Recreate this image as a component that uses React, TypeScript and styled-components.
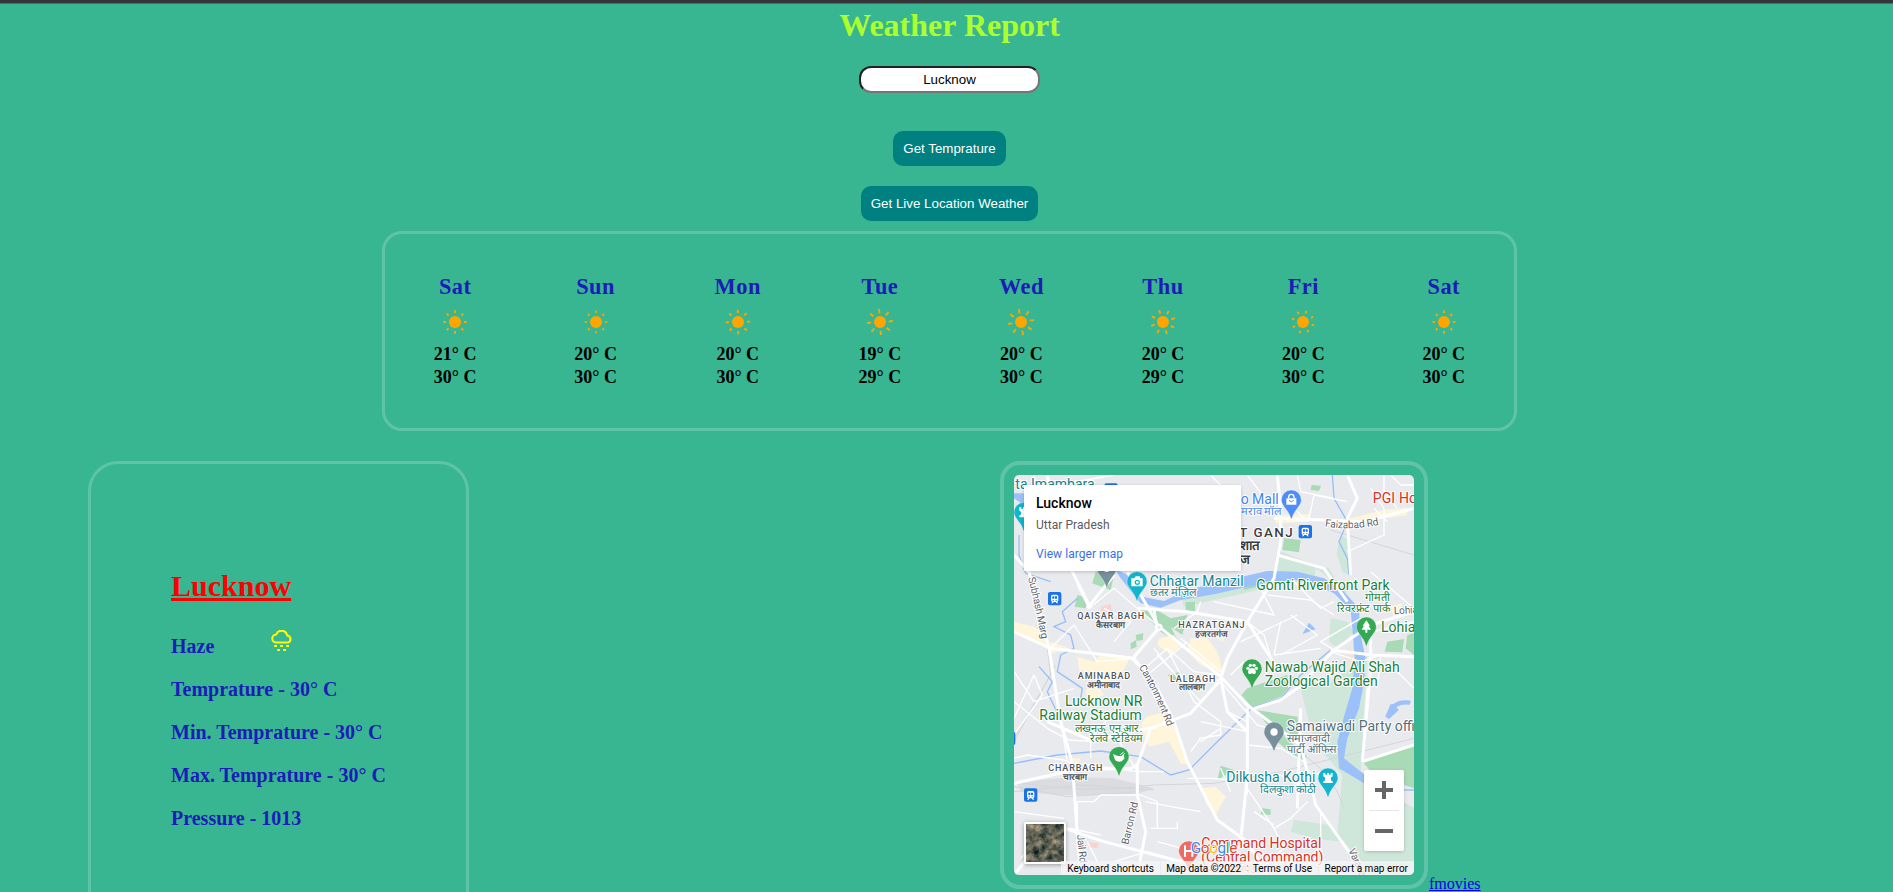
import React from "react";
import styled, { createGlobalStyle } from "styled-components";

const GlobalStyle = createGlobalStyle`
  * { box-sizing: border-box; }
  html, body { margin: 0; padding: 0; background: #37b691; overflow: hidden; }
`;

const Page = styled.main`
  height: 892px;
  overflow: hidden;
  background: #37b691;
  border-top: 3px solid #35363a;
  box-shadow: inset 0 1px 0 #57695f;
  font-family: "Liberation Serif", "Times New Roman", serif;
`;

const Header = styled.header`
  display: flex;
  flex-direction: column;
  align-items: center;
  padding: 4px 0 0 6px;
`;

const Title = styled.h1`
  margin: 0;
  font-size: 32px;
  line-height: 37px;
  color: #adff2f;
`;

const CityInput = styled.input`
  margin-top: 22px;
  width: 181px;
  height: 27px;
  padding: 1px 2px;
  border: 2px inset #767676;
  border-radius: 12px;
  background: #fff;
  color: #000;
  font: 13.333px "Liberation Sans", Arial, sans-serif;
  text-align: center;
`;

const ActionButton = styled.button<{ $gap: number }>`
  margin-top: ${(p) => p.$gap}px;
  height: 35px;
  padding: 10px;
  border: 0;
  border-radius: 10px;
  background: #008080;
  color: #fff;
  font: 13.333px/15px "Liberation Sans", Arial, sans-serif;
`;

const Forecast = styled.section`
  display: flex;
  justify-content: space-around;
  width: 1135px;
  height: 200px;
  margin: 10px 0 0 382px;
  padding-top: 40px;
  border: 3px solid rgba(255, 255, 255, 0.2);
  border-radius: 20px;
`;

const Day = styled.div`
  display: flex;
  flex-direction: column;
  align-items: center;
`;

const DayName = styled.h2`
  margin: 0;
  font-size: 22.4px;
  line-height: 26px;
  letter-spacing: 0.5px;
  color: #1c1cb8;
`;

const SunSvg = styled.svg`
  display: block;
  width: 30px;
  height: 30px;
  margin: 7px 0 6px;
`;

const Temp = styled.span`
  font-size: 18px;
  font-weight: bold;
  line-height: 23px;
  color: #000;
`;

const Details = styled.div`
  display: flex;
  align-items: flex-start;
  margin-top: 30px;
`;

const Current = styled.section`
  width: 381px;
  height: 500px;
  margin-left: 88px;
  padding: 104px 0 0 80px;
  border: 3px solid rgba(255, 255, 255, 0.2);
  border-radius: 30px;
`;

const City = styled.h2`
  margin: 0 0 32px;
  font-size: 30px;
  line-height: 35px;
  color: #ff0000;
  text-decoration: underline;
  text-decoration-thickness: 3px;
  text-underline-offset: 2px;
  text-decoration-skip-ink: none;
`;

const Reading = styled.p`
  display: flex;
  margin: 0 0 20px;
  font-size: 20px;
  font-weight: bold;
  line-height: 23px;
  white-space: pre;
  color: #1c1cb8;
`;

const CloudSvg = styled.svg`
  width: 22px;
  height: 22px;
  margin: -5px 0 0 57px;
`;

const MapCard = styled.section`
  width: 428px;
  height: 428px;
  margin-left: 531px;
  padding: 10px;
  border: 4px solid rgba(255, 255, 255, 0.2);
  border-radius: 20px;
`;

const MapFrame = styled.div`
  position: relative;
  width: 400px;
  height: 400px;
  overflow: hidden;
  border-radius: 5px;
  font-family: Roboto, sans-serif;
`;

const MapSvg = styled.svg`
  display: block;
  width: 400px;
  height: 400px;
`;

const PlaceCard = styled.div`
  position: absolute;
  left: 10px;
  top: 10px;
  width: 217px;
  height: 86px;
  padding: 10px 12px;
  background: #fff;
  border-radius: 1px;
  box-shadow: 0 1px 4px -1px rgba(0, 0, 0, 0.3);
`;

const PlaceName = styled.div`
  font-size: 14px;
  font-weight: 500;
  line-height: 17px;
`;

const PlaceRegion = styled.div`
  margin-top: 6px;
  font-size: 12px;
  line-height: 14px;
  letter-spacing: 0.05px;
  color: #5b5b5b;
`;

const PlaceLink = styled.div`
  margin-top: 15px;
  font-size: 12px;
  line-height: 14px;
  letter-spacing: 0.05px;
  color: #3a6fe8;
`;

const ZoomBox = styled.div`
  position: absolute;
  right: 10px;
  top: 295px;
  width: 40px;
  height: 81px;
  background: #fff;
  border-radius: 2px;
  box-shadow: 0 1px 4px -1px rgba(0, 0, 0, 0.3);
`;

const SatelliteBox = styled.div`
  position: absolute;
  left: 10px;
  top: 347px;
  width: 42px;
  height: 42px;
  border: 2px solid #fff;
  border-radius: 2px;
  box-shadow: 0 1px 4px rgba(0, 0, 0, 0.35);
  overflow: hidden;
`;

const Legal = styled.div`
  position: absolute;
  right: 0;
  bottom: 0;
  display: flex;
  height: 14px;
  font-size: 10px;
  line-height: 15px;
  color: #000;
`;

const LegalItem = styled.span<{ $w: number }>`
  width: ${(p) => p.$w}px;
  margin-left: 1px;
  padding-right: 6px;
  text-align: right;
  white-space: nowrap;
  background: rgba(245, 245, 245, 0.75);
`;

const FooterLink = styled.a`
  align-self: flex-start;
  margin: 414px 0 0 1px;
  font-size: 16px;
  line-height: 18px;
  color: #0000ee;
  text-decoration: underline;
`;

const days = [
  { name: "Sat", low: 21, high: 30, angle: 0, inner: 9, outer: 11.7 },
  { name: "Sun", low: 20, high: 30, angle: 0, inner: 9.2, outer: 11.2 },
  { name: "Mon", low: 20, high: 30, angle: -1, inner: 9, outer: 12.2 },
  { name: "Tue", low: 19, high: 29, angle: -4, inner: 8.8, outer: 13 },
  { name: "Wed", low: 20, high: 30, angle: -9, inner: 8.8, outer: 13.2 },
  { name: "Thu", low: 20, high: 29, angle: -18, inner: 8.8, outer: 12.5 },
  { name: "Fri", low: 20, high: 30, angle: -28, inner: 9, outer: 11.6 },
  { name: "Sat", low: 20, high: 30, angle: -45, inner: 9, outer: 11.4 },
];

const Sun = ({ angle, inner, outer }: { angle: number; inner: number; outer: number }) => (
  <SunSvg viewBox="-15 -15 30 30">
    <circle r="6" fill="#ffa500" />
    {[0, 45, 90, 135, 180, 225, 270, 315].map((a) => (
      <path
        key={a}
        d={`M0 ${-inner}V${-outer}`}
        stroke="#faa505"
        strokeWidth="2"
        transform={`rotate(${a + angle})`}
      />
    ))}
  </SunSvg>
);

const paleParks = [
  "M790 225L880 262L945 280L985 350L1010 400L995 345L905 280L900 330L860 310L780 285Z",
  "M980 180L1010 200L1005 300L985 290L968 235Z",
  "M950 430L1000 440L1020 470L970 520L945 500Z",
  "M820 600L940 630L1060 540L1050 700L1040 900L1200 1000V1200H1080L970 1080L985 900L900 800L880 720L860 640Z",
  "M840 1035L950 1050L980 1100L900 1090L830 1070Z",
  "M500 360L690 330L775 310V335L600 375L510 395Z",
];

const parks = [
  "M810 190L860 195L855 232L805 225Z",
  "M420 400L470 430L520 420L505 480L470 455L495 505L440 470L380 405Z",
  "M245 290L300 300L290 345L235 325Z",
  "M190 360L220 370L215 400L182 395Z",
  "M515 382L543 380L543 408L515 408Z",
  "M700 640L820 600L822 640L800 665L715 698L682 660Z",
  "M725 705L850 725L860 800L820 770L800 800Z",
  "M800 775L880 845L860 860L790 800Z",
  "M1045 860L1200 812V940L1080 900Z",
  "M1120 500L1170 492L1165 532L1112 530Z",
  "M1180 480L1200 475V540L1175 520Z",
  "M620 872L660 885L610 915Z",
  "M745 1000L770 1003L770 1020L740 1018Z",
  "M365 480L388 475L386 495L368 498Z",
  "M350 505L366 495L368 515L350 523Z",
  "M245 572L270 575L272 595L248 590Z",
  "M460 600L500 590L490 625Z",
  "M893 30L921 32L915 48L890 45Z",
  "M690 315L775 300V325L690 345Z",
];

const yellows = [
  "M0 440L60 455L100 480L95 515L60 495L0 470Z",
  "M190 545L240 560L260 540L350 545L320 600L270 625L230 590L195 585Z",
  "M435 490L480 480L500 510L470 540L430 510Z",
  "M530 490L580 490L610 530L630 600L560 570L520 530Z",
  "M395 725L450 712L490 770L525 870L500 865L465 800L405 815L380 750Z",
  "M565 940L605 935L635 965L605 1020L575 985Z",
  "M600 480L640 470L625 500Z",
  "M1000 132L1110 105L1180 98L1180 120L1050 140Z",
  "M1130 395L1165 385L1160 430L1140 425Z",
  "M215 645L250 630L270 660L220 680Z",
  "M110 500L165 520L100 540Z",
  "M785 120L885 118V140L785 145Z",
  "M165 850L200 850L190 870Z",
];

const waters = [
  "M300 280L340 300L385 365L450 378L520 345L640 315L760 288L850 290L930 310L985 345L1035 400L1038 470L1055 550L1050 620L1035 700L1000 790L990 850L1060 905L1050 925L975 880L970 800L990 725L1015 640L1022 550L1015 460L1010 405L960 355L900 328L840 315L700 335L600 358L500 375L440 398L380 385L320 310Z",
  "M865 478L885 443L905 462Z",
  "M0 55H30V90L0 70Z",
];

const streams = [
  "M955 0L960 70L1000 140L975 200L1000 250L1005 300",
  "M15 180V240L35 295L110 320M190 370L145 410L155 440L120 455L170 480L180 520L140 540L130 590L205 640L200 670M75 575L115 620L100 650L140 735",
  "M0 865L130 840L260 828L380 845L470 900L525 885L600 810L715 697L800 670L860 600L950 525",
  "M1120 725L1130 690L1190 682",
  "M1170 945H1200",
];

const minorRoads = [
  "M60 0L80 80L130 30L300 0M590 0L620 30M700 0L745 60L850 110L870 130M850 0L860 50L960 70M885 130L900 60L1000 80",
  "M0 590L60 680L180 640M0 680L100 760L165 795L245 800M0 730L60 600M140 735L160 860M0 780L85 660L60 600",
  "M110 520L180 450L250 560L360 550L435 455L300 340L225 400L190 330M270 400L350 440L300 500M350 550L400 600L520 500M380 590L460 520L540 590L620 600M420 520L500 620L620 615",
  "M430 540L560 680M460 520L540 680M500 490L620 590M540 680L620 740L620 780L555 790M560 790L530 830",
  "M560 380L550 410L480 460M600 380L780 420L740 340M760 360L890 375L960 420M700 440L750 480L770 545M800 440L780 540M830 420L910 480L800 540M680 500L850 420M780 540L920 520",
  "M0 850L40 840L150 855L175 865M185 865L220 870L370 890L450 890M370 890L310 790L235 790M230 850V790L300 710",
  "M190 980H240L260 960H380L430 980V1060M190 980V1100M395 980L500 1000L560 1010M0 1010L150 1030M410 1060H490V1040M430 1100L540 1130",
  "M520 910H600L700 920V960M700 900H800L850 930M620 880L650 950M700 940L780 1060L830 1030L880 980M780 1060L810 1120L720 1200M780 1050L720 1010",
  "M560 740L700 770M640 710L700 740M620 760L560 800M700 810L800 820L870 860M620 620L730 750L830 780",
  "M1110 0V50L1150 100M1070 40L1110 100V180L1000 230M1070 290L1200 400M1080 470L1200 440M1100 540L1090 640M1120 560L1200 640M1130 0L1160 30H1200M1080 100L1120 140",
  "M20 1150L120 1050L260 1080M220 1100L270 1200M300 1160L400 1130L540 1170M920 1010V1130L860 1200M1060 640L1050 780M900 900L950 880",
  "M690 560L650 600M840 320L920 400L960 380M950 530L1040 560L1100 540M960 525L920 500L1040 430",
];

const majorRoads = [
  "M0 240L45 290L80 420L105 520L140 740L175 865L190 1080L200 1200",
  "M340 290L435 455L540 540L620 605L700 690L860 810L905 990L1040 1180",
  "M0 470L110 520L360 550M360 545L430 465L420 405M360 550L430 640L480 740L520 860L610 1035L700 1100L760 1200",
  "M790 0L800 100V200L780 310L700 440L640 550L620 610L640 710L700 770V900L680 1100",
  "M370 400L520 410L700 440L790 580",
  "M370 1200L395 1070L370 960V870L410 760L530 715L615 620",
  "M0 925L180 885L350 880L370 870M410 760L340 770L240 800L100 740",
  "M720 700L800 675L850 640L960 525L1070 450L1200 410M950 525L1075 540L1200 545",
  "M1000 0L1030 70L1000 130L1010 300M780 130L930 135L1050 140L1200 100",
  "M790 240L930 280L1000 380M230 400L140 220L100 0M220 400L300 300",
  "M700 700V770M1045 860L1200 810M1070 480V580L1045 860M850 1000L860 700",
  "M120 1050L0 1200M120 1050L270 1100L540 1170",
];

interface LabelProps {
  x: number;
  y: number;
  w?: number;
  size?: number;
  color: string;
  weight?: number;
  anchor?: "start" | "middle" | "end";
  rotate?: number;
  children: string;
}

const MapLabel = ({ x, y, w, size = 42, color, weight = 400, anchor = "start", rotate, children }: LabelProps) => (
  <text
    x={x}
    y={y}
    textLength={w}
    fontSize={size}
    fontWeight={weight}
    fill={color}
    stroke="#fff"
    strokeWidth="6"
    strokeLinejoin="round"
    paintOrder="stroke"
    textAnchor={anchor}
    transform={rotate ? `rotate(${rotate} ${x} ${y})` : undefined}
  >
    {children}
  </text>
);

const Pin = ({ x, y, color, children }: { x: number; y: number; color: string; children?: React.ReactNode }) => (
  <g transform={`translate(${x} ${y})`}>
    <path
      d="M0 -30A30 30 0 0 1 30 0C30 17 9 29 2 54Q0 60 -2 54C-9 29 -30 17 -30 0A30 30 0 0 1 0 -30Z"
      fill={color}
      stroke="#fff"
      strokeOpacity="0.5"
      strokeWidth="2"
    />
    <g fill="#fff">{children}</g>
  </g>
);

const Station = ({ x, y }: { x: number; y: number }) => (
  <g transform={`translate(${x} ${y})`}>
    <rect x="-20" y="-20" width="40" height="40" rx="6" fill="#1a73e8" />
    <path
      d="M-6 -12H6Q11 -12 11 -7V5Q11 9 7 10L11 14H6L3 10H-3L-6 14H-11L-7 10Q-11 9 -11 5V-7Q-11 -12 -6 -12Z"
      fill="#fff"
    />
    <path d="M-7 -7H-1V0H-7ZM1 -7H7V0H1ZM-6 4H-3V7H-6ZM3 4H6V7H3Z" fill="#1a73e8" />
  </g>
);

const Tower = () => <path d="M-14 -15H-8V-10H-3V-15H3V-10H8V-15H14V-5L8 -1L10 9H14V15H-14V9H-10L-8 -1L-14 -5Z" />;

const green = "#188038";
const teal = "#12858f";
const slate = "#546e7a";
const area = "#50555b";
const red = "#d93025";

const CityMap = () => (
  <MapSvg viewBox="0 0 1200 1200">
    <rect width="1200" height="1200" fill="#e8eaed" />
    {paleParks.map((d) => <path key={d} d={d} fill="#cfe6da" />)}
    {parks.map((d) => <path key={d} d={d} fill="#a8dab5" />)}
    {yellows.map((d) => <path key={d} d={d} fill="#fef5da" />)}
    <path d="M260 395L290 388L295 410L262 412ZM220 1100L255 1105L250 1120L222 1115Z" fill="#fad2cf" />
    <path d="M985 535L1020 500L1025 570L985 580Z" fill="#efe6dd" />
    <path d="M10 925Q140 900 300 910L420 940L360 960L150 960L20 950Z" fill="#dadce0" />
    <g fill="none" stroke="#d3d6d9" strokeWidth="3">
      <path d="M0 920Q200 960 420 930L600 925L800 890L1200 790M0 950L200 930L420 945M0 935L160 965L370 950M950 165L1200 240" />
      <path d="M0 790L110 600L100 520M0 800L125 570M870 840Q960 900 990 1000" />
    </g>
    {streams.map((d) => <path key={d} d={d} fill="none" stroke="#98bff8" strokeWidth="4" />)}
    {waters.map((d) => <path key={d} d={d} fill="#9cc0f9" />)}
    <path d="M1120 728Q1135 675 1188 683M1120 728L1150 700" fill="none" stroke="#9cc0f9" strokeWidth="13" />
    {minorRoads.map((d) => (
      <path key={d} d={d} fill="none" stroke="#fff" strokeWidth="4" strokeLinejoin="round" />
    ))}
    {majorRoads.map((d) => (
      <path key={d} d={d} fill="none" stroke="#fff" strokeWidth="9" strokeLinejoin="round" />
    ))}
    <circle cx="435" cy="457" r="8" fill="#e8eaed" stroke="#fff" strokeWidth="6" />

    <MapLabel x={4} y={42} w={238} color={teal}>ta Imambara</MapLabel>
    <Station x={291} y={45} />
    <Pin x={30} y={112} color="#12b5cb"><Tower /></Pin>
    <Pin x={278} y={280} color="#78909c"><circle r="11" /></Pin>

    <MapLabel x={680} y={87} w={114} color="#4285f4">o Mall</MapLabel>
    <MapLabel x={680} y={121} size={33} color="#4285f4">मराव मॉल</MapLabel>
    <Pin x={832} y={75} color="#4e8df5">
      <path d="M-15 -5H15V14H-15Z" />
      <path d="M-8 -5V-9A8 8 0 0 1 8 -9V-5" fill="none" stroke="#fff" strokeWidth="4" />
      <path d="M-7 1Q0 10 7 1" fill="none" stroke="#4e8df5" strokeWidth="3" />
    </Pin>
    <MapLabel x={1076} y={83} w={238} color={red}>PGI Hospital</MapLabel>
    <g fontSize="31" fill="#5f6368" stroke="#fff" strokeWidth="6" paintOrder="stroke">
      <path id="faizabad" d="M932 154Q1015 168 1100 148" fill="none" stroke="none" />
      <text textLength="164"><textPath href="#faizabad">Faizabad Rd</textPath></text>
      <path id="subhash" d="M42 309Q65 400 84 497" fill="none" stroke="none" />
      <text textLength="188"><textPath href="#subhash">Subhash Marg</textPath></text>
      <path id="cantonment" d="M374 577Q415 640 462 760" fill="none" stroke="none" />
      <text textLength="198"><textPath href="#cantonment">Cantonment Rd</textPath></text>
    </g>
    <MapLabel x={676} y={186} w={160} size={40} weight={500} color="#3c4043">T GANJ</MapLabel>
    <Station x={874} y={170} />
    <MapLabel x={678} y={226} size={40} weight={700} color="#3c4043">शात</MapLabel>
    <MapLabel x={678} y={266} size={40} weight={700} color="#3c4043">ज</MapLabel>

    <Pin x={369} y={320} color="#12b5cb">
      <path d="M-17 -10H-8L-4 -16H8L10 -10H17V14H-17Z" />
      <circle cx="1" cy="2" r="8" fill="#12b5cb" />
      <circle cx="1" cy="2" r="4" />
    </Pin>
    <MapLabel x={407} y={332} w={282} color={teal}>Chhatar Manzil</MapLabel>
    <MapLabel x={407} y={364} size={33} color={teal}>छतर मंज़िल</MapLabel>
    <MapLabel x={727} y={346} w={400} color={green}>Gomti Riverfront Park</MapLabel>
    <MapLabel x={1127} y={379} size={33} color={green} anchor="end">गोमती</MapLabel>
    <MapLabel x={1127} y={411} size={33} color={green} anchor="end">रिवरफ्रंट पार्क</MapLabel>
    <MapLabel x={1140} y={418} w={140} size={31} color="#5f6368" rotate={-3}>Lohia Path</MapLabel>
    <Station x={122} y={371} />

    <MapLabel x={290} y={431} w={201} size={27} weight={500} color={area} anchor="middle">QAISAR BAGH</MapLabel>
    <MapLabel x={290} y={458} size={27} weight={700} color={area} anchor="middle">कैसरबाग</MapLabel>
    <MapLabel x={592} y={459} w={199} size={27} weight={500} color={area} anchor="middle">HAZRATGANJ</MapLabel>
    <MapLabel x={592} y={485} size={27} weight={700} color={area} anchor="middle">हजरतगंज</MapLabel>
    <Pin x={1057} y={456} color="#34a853">
      <path d="M0 -20L11 -4H7L14 8H3V17H-3V8H-14L-7 -4H-11Z" />
    </Pin>
    <MapLabel x={1101} y={472} w={198} color={green}>Lohia Park</MapLabel>

    <Pin x={714} y={582} color="#34a853">
      <circle cx="-12" cy="-2" r="5" />
      <circle cx="-5" cy="-11" r="5" />
      <circle cx="6" cy="-11" r="5" />
      <circle cx="13" cy="-2" r="5" />
      <path d="M0 -3C8 -3 15 8 10 14Q5 16 0 13Q-5 16 -10 14C-15 8 -8 -3 0 -3Z" />
    </Pin>
    <MapLabel x={752} y={591} w={405} color={green}>Nawab Wajid Ali Shah</MapLabel>
    <MapLabel x={752} y={633} w={339} color={green}>Zoological Garden</MapLabel>
    <MapLabel x={270} y={613} w={157} size={27} weight={500} color={area} anchor="middle">AMINABAD</MapLabel>
    <MapLabel x={269} y={640} size={27} weight={700} color={area} anchor="middle">अमीनाबाद</MapLabel>
    <MapLabel x={536} y={620} w={136} size={27} weight={500} color={area} anchor="middle">LALBAGH</MapLabel>
    <MapLabel x={535} y={646} size={27} weight={700} color={area} anchor="middle">लालबाग</MapLabel>

    <MapLabel x={385} y={694} w={232} color={green} anchor="end">Lucknow NR</MapLabel>
    <MapLabel x={383} y={736} w={307} color={green} anchor="end">Railway Stadium</MapLabel>
    <MapLabel x={385} y={770} size={33} color={green} anchor="end">लखनऊ एन.आर.</MapLabel>
    <MapLabel x={387} y={802} size={33} color={green} anchor="end">रेलवे स्टेडियम</MapLabel>
    <Pin x={315} y={845} color="#34a853">
      <path d="M-18 -8L-6 -3L4 -1L15 -5L16 6L8 14Q-4 17 -12 10Z" />
      <path d="M4 -6L14 -14M9 -2L17 -10" stroke="#fff" strokeWidth="3" />
    </Pin>
    <MapLabel x={184} y={888} w={163} size={27} weight={500} color={area} anchor="middle">CHARBAGH</MapLabel>
    <MapLabel x={184} y={914} size={27} weight={700} color={area} anchor="middle">चारबाग</MapLabel>
    <Station x={50} y={960} />
    <Station x={-16} y={790} />

    <Pin x={780} y={771} color="#78909c"><circle r="11" /></Pin>
    <MapLabel x={818} y={768} w={428} color={slate}>Samaiwadi Party office</MapLabel>
    <MapLabel x={818} y={801} size={33} color={slate}>समाजवादी</MapLabel>
    <MapLabel x={818} y={833} size={33} color={slate}>पार्टी ऑफिस</MapLabel>
    <MapLabel x={637} y={922} w={267} color={teal}>Dilkusha Kothi</MapLabel>
    <MapLabel x={907} y={955} size={33} color={teal} anchor="end">दिलकुशा कोठी</MapLabel>
    <Pin x={942} y={909} color="#12b5cb"><Tower /></Pin>

    <MapLabel x={343} y={1110} w={130} size={31} color="#5f6368" rotate={-77}>Barron Rd</MapLabel>
    <MapLabel x={189} y={1080} w={85} size={31} color="#5f6368" rotate={84}>Jail Rd</MapLabel>
    <MapLabel x={1003} y={1126} w={110} size={31} color="#5f6368" rotate={66}>Varanasi</MapLabel>

    <Pin x={524} y={1128} color="#ec6b62">
      <path d="M-14 -17H-8V-3H8V-17H14V17H8V3H-8V17H-14Z" />
    </Pin>
    <MapLabel x={562} y={1120} w={360} color={red}>Command Hospital</MapLabel>
    <MapLabel x={562} y={1162} w={366} color={red}>(Central Command)</MapLabel>
    <MapLabel x={562} y={1195} size={33} color="#f28b82">कमांड हॉस्पिटल</MapLabel>
    <text x="530" y="1134" fontSize="46" textLength="140" stroke="#fff" strokeWidth="5" paintOrder="stroke">
      <tspan fill="#4285f4">G</tspan>
      <tspan fill="#ea4335">o</tspan>
      <tspan fill="#fbbc05">o</tspan>
      <tspan fill="#4285f4">g</tspan>
      <tspan fill="#34a853">l</tspan>
      <tspan fill="#ea4335">e</tspan>
    </text>
  </MapSvg>
);

const readings = ["Temprature - 30° C", "Min. Temprature - 30° C", "Max. Temprature - 30° C", "Pressure - 1013"];

export default function App() {
  return (
    <>
      <GlobalStyle />
      <Page>
        <Header>
          <Title>Weather Report</Title>
          <CityInput defaultValue="Lucknow" />
          <ActionButton $gap={38}>Get Temprature</ActionButton>
          <ActionButton $gap={20}>Get Live Location Weather</ActionButton>
        </Header>
        <Forecast>
          {days.map((d, i) => (
            <Day key={i}>
              <DayName>{d.name}</DayName>
              <Sun angle={d.angle} inner={d.inner} outer={d.outer} />
              <Temp>{d.low}° C</Temp>
              <Temp>{d.high}° C</Temp>
            </Day>
          ))}
        </Forecast>
        <Details>
          <Current>
            <City>Lucknow</City>
            <Reading>
              Haze
              <CloudSvg viewBox="0 0 22 22">
                <path
                  d="M5.4 12.6A4.1 4.1 0 0 1 5.3 4.4A5.6 5.6 0 0 1 16.1 5.6A3.6 3.6 0 0 1 17 12.6Z"
                  fill="none"
                  stroke="#ffff00"
                  strokeWidth="2"
                  strokeLinejoin="round"
                />
                <path d="M3.2 15H6V17H3.2ZM9.2 15H12V17H9.2ZM15.2 15H18V17H15.2ZM6.2 19H9V21H6.2ZM12.2 19H15V21H12.2Z" fill="#ffff00" />
              </CloudSvg>
            </Reading>
            {readings.map((r) => (
              <Reading key={r}>{r}</Reading>
            ))}
          </Current>
          <MapCard>
            <MapFrame>
              <CityMap />
              <PlaceCard>
                <PlaceName>Lucknow</PlaceName>
                <PlaceRegion>Uttar Pradesh</PlaceRegion>
                <PlaceLink>View larger map</PlaceLink>
              </PlaceCard>
              <SatelliteBox>
                <svg width="38" height="38">
                  <filter id="terrain" x="0" y="0" width="1" height="1" colorInterpolationFilters="sRGB">
                    <feTurbulence type="fractalNoise" baseFrequency="0.13" numOctaves="4" seed="8" />
                    <feColorMatrix values="1 0 0 0 -0.12  0.75 0 0 0 0.01  0.6 0.1 0 0 -0.02  0 0 0 0 1" />
                  </filter>
                  <rect width="38" height="38" filter="url(#terrain)" />
                </svg>
              </SatelliteBox>
              <ZoomBox>
                <svg width="40" height="81">
                  <path d="M11 20H29M20 11V29M11 61H29" stroke="#666" strokeWidth="4" />
                  <path d="M5 40.5H35" stroke="#e6e6e6" />
                </svg>
              </ZoomBox>
              <Legal>
                <LegalItem $w={99}>Keyboard shortcuts</LegalItem>
                <LegalItem $w={86}>Map data ©2022</LegalItem>
                <LegalItem $w={70}>Terms of Use</LegalItem>
                <LegalItem $w={95}>Report a map error</LegalItem>
              </Legal>
            </MapFrame>
          </MapCard>
          <FooterLink href="#">fmovies</FooterLink>
        </Details>
      </Page>
    </>
  );
}
